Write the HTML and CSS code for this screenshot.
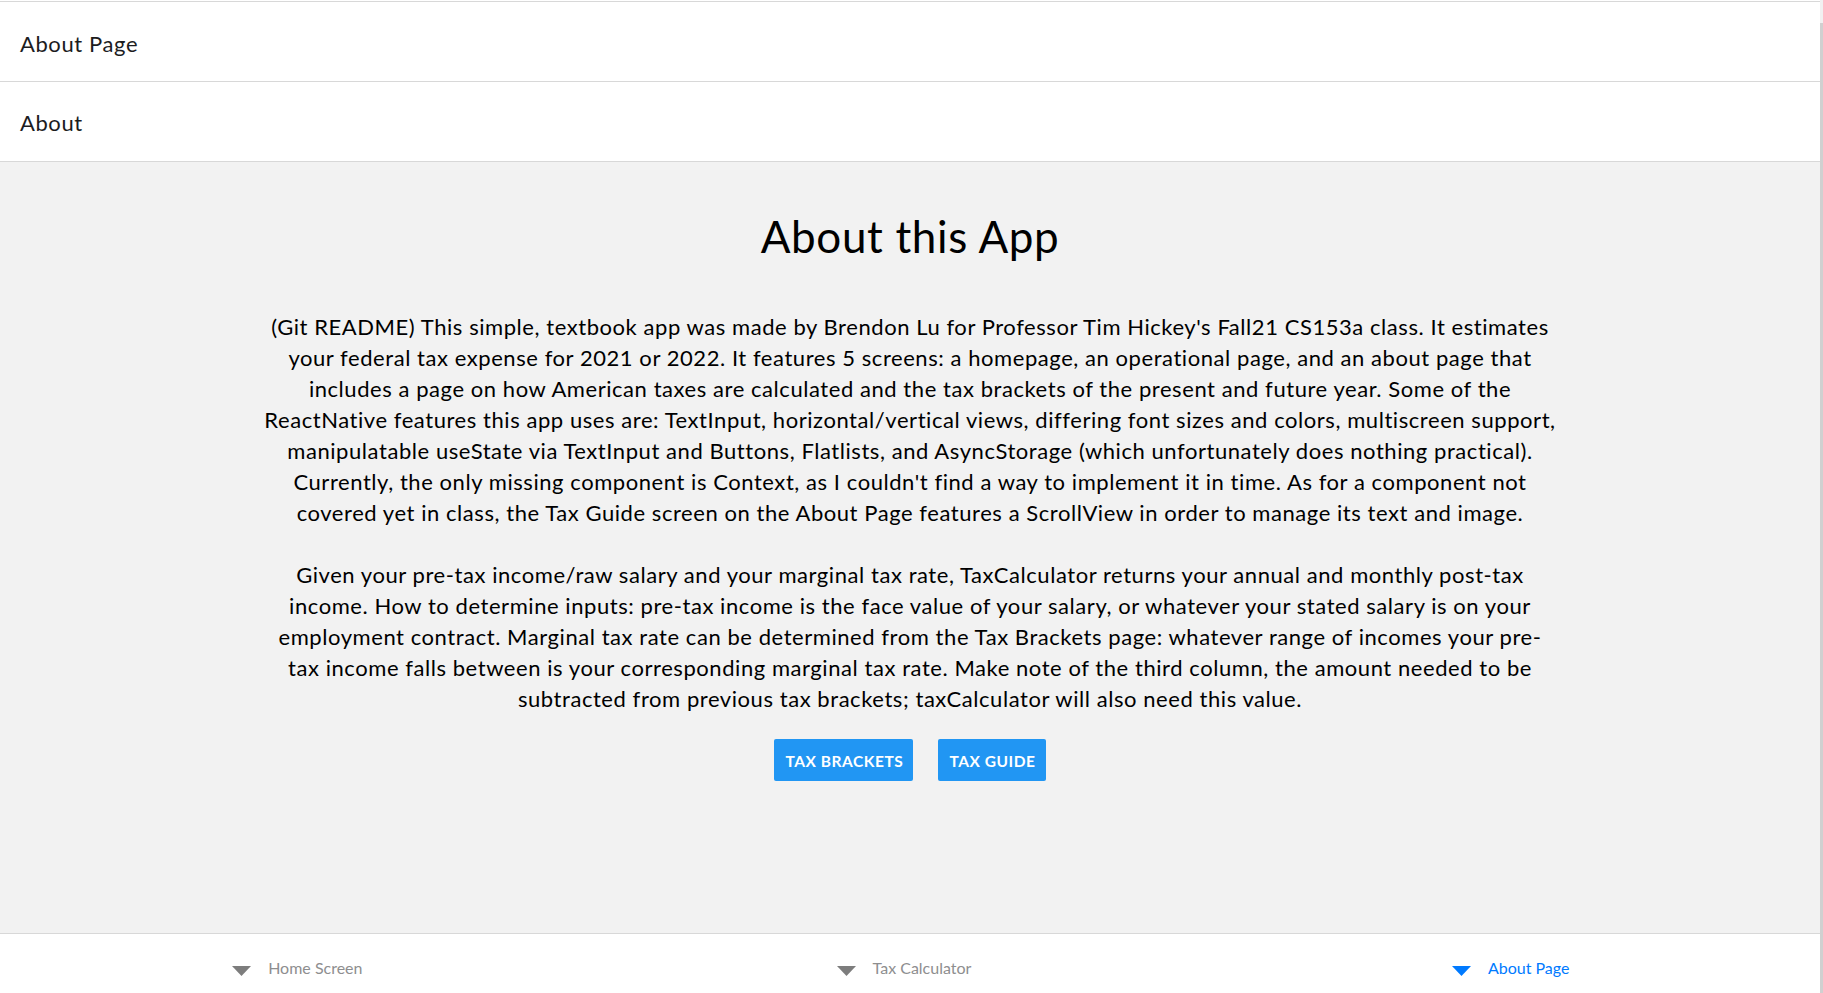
FILE: index.html
```html
<!DOCTYPE html>
<html lang="en">
<head>
<meta charset="utf-8">
<title>About Page</title>
<link rel="stylesheet" href="styles.css">
</head>
<body>
<div class="app">
  <div class="main">
    <header class="topbar"><span class="topbar-title">About Page</span></header>
    <header class="navbar"><span class="navbar-title">About</span></header>
    <main class="content">
      <h1 class="title">About this App</h1>
      <p class="readme">(Git README) This simple, textbook app was made by Brendon Lu for Professor Tim Hickey's Fall21 CS153a class. It estimates<br>your federal tax expense for 2021 or 2022. It features 5 screens: a homepage, an operational page, and an about page that<br>includes a page on how American taxes are calculated and the tax brackets of the present and future year. Some of the<br>ReactNative features this app uses are: TextInput, horizontal/vertical views, differing font sizes and colors, multiscreen support,<br>manipulatable useState via TextInput and Buttons, Flatlists, and AsyncStorage (which unfortunately does nothing practical).<br>Currently, the only missing component is Context, as I couldn't find a way to implement it in time. As for a component not<br>covered yet in class, the Tax Guide screen on the About Page features a ScrollView in order to manage its text and image.</p>
      <p class="readme">Given your pre-tax income/raw salary and your marginal tax rate, TaxCalculator returns your annual and monthly post-tax<br>income. How to determine inputs: pre-tax income is the face value of your salary, or whatever your stated salary is on your<br>employment contract. Marginal tax rate can be determined from the Tax Brackets page: whatever range of incomes your pre-<br>tax income falls between is your corresponding marginal tax rate. Make note of the third column, the amount needed to be<br>subtracted from previous tax brackets; taxCalculator will also need this value.</p>
      <div class="actions">
        <button class="btn" type="button">TAX BRACKETS</button>
        <button class="btn" type="button">TAX GUIDE</button>
      </div>
    </main>
    <nav class="tabbar">
      <a class="tab">
        <svg class="tab-icon" width="19" height="10" viewBox="0 0 19 10"><polygon points="0,0 19,0 9.5,10"/></svg>
        <span class="tab-label">Home Screen</span>
      </a>
      <a class="tab">
        <svg class="tab-icon" width="19" height="10" viewBox="0 0 19 10"><polygon points="0,0 19,0 9.5,10"/></svg>
        <span class="tab-label">Tax Calculator</span>
      </a>
      <a class="tab tab-active">
        <svg class="tab-icon" width="19" height="10" viewBox="0 0 19 10"><polygon points="0,0 19,0 9.5,10"/></svg>
        <span class="tab-label">About Page</span>
      </a>
    </nav>
  </div>
  <div class="scrollbar"><div class="scrollbar-thumb"></div></div>
</div>
</body>
</html>
```

FILE: styles.css
```css
* { box-sizing: border-box; }
html, body { margin: 0; height: 100%; }
body {
  font-family: Lato, "Noto Sans", sans-serif;
  background: #fff;
  overflow: hidden;
  color: #000;
}
.app { display: flex; height: 100vh; }
.main {
  flex: 1;
  min-width: 0;
  display: flex;
  flex-direction: column;
  padding-top: 1px;
}
.scrollbar {
  width: 3px;
  background: #f1f1f1;
  padding-top: 23px;
  display: flex;
}
.scrollbar-thumb { flex: 1; background: #d0d0d0; }

.topbar {
  height: 81px;
  border-top: 1px solid #d8d8d8;
  border-bottom: 1px solid #d8d8d8;
  display: flex;
  align-items: center;
  padding: 3px 0 0 20px;
  background: #fff;
}
.navbar {
  height: 80px;
  border-bottom: 1px solid #d8d8d8;
  display: flex;
  align-items: center;
  padding: 2px 0 0 20px;
  background: #fff;
}
.topbar-title, .navbar-title {
  font-size: 22px;
  letter-spacing: 0.6px;
  color: rgb(28, 28, 30);
}

.content {
  flex: 1;
  background: #f2f2f2;
  display: flex;
  flex-direction: column;
  align-items: center;
  padding-top: 48px;
}
.title {
  margin: 0;
  font-size: 44px;
  font-weight: 400;
  line-height: 1.2;
  letter-spacing: 0.65px;
}
.readme {
  margin: 48px 0 0;
  font-size: 22px;
  letter-spacing: 0.56px;
  line-height: 31px;
  text-align: center;
  white-space: nowrap;
}
.readme + .readme { margin-top: 31px; }

.actions {
  display: flex;
  gap: 25px;
  margin-top: 25.5px;
}
.btn {
  height: 42px;
  padding: 1px 10px 0 11px;
  border: 0;
  border-radius: 2px;
  background: #2196f3;
  color: #fff;
  font-family: inherit;
  font-size: 15.5px;
  font-weight: 700;
  letter-spacing: 0.55px;
  display: flex;
  align-items: center;
}

.tabbar {
  height: 60px;
  border-top: 1px solid #d8d8d8;
  background: #fff;
  display: grid;
  grid-template-columns: repeat(3, 1fr);
}
.tab {
  display: flex;
  align-items: center;
  justify-content: center;
  gap: 17px;
  padding: 7px 12px 0 0;
  color: #8e8e8f;
}
.tab-icon { fill: #7d7d7d; margin-top: 7px; }
.tab-label { font-size: 16px; }
.tab-active { color: #007aff; }
.tab-active .tab-icon { fill: #007aff; }
```
